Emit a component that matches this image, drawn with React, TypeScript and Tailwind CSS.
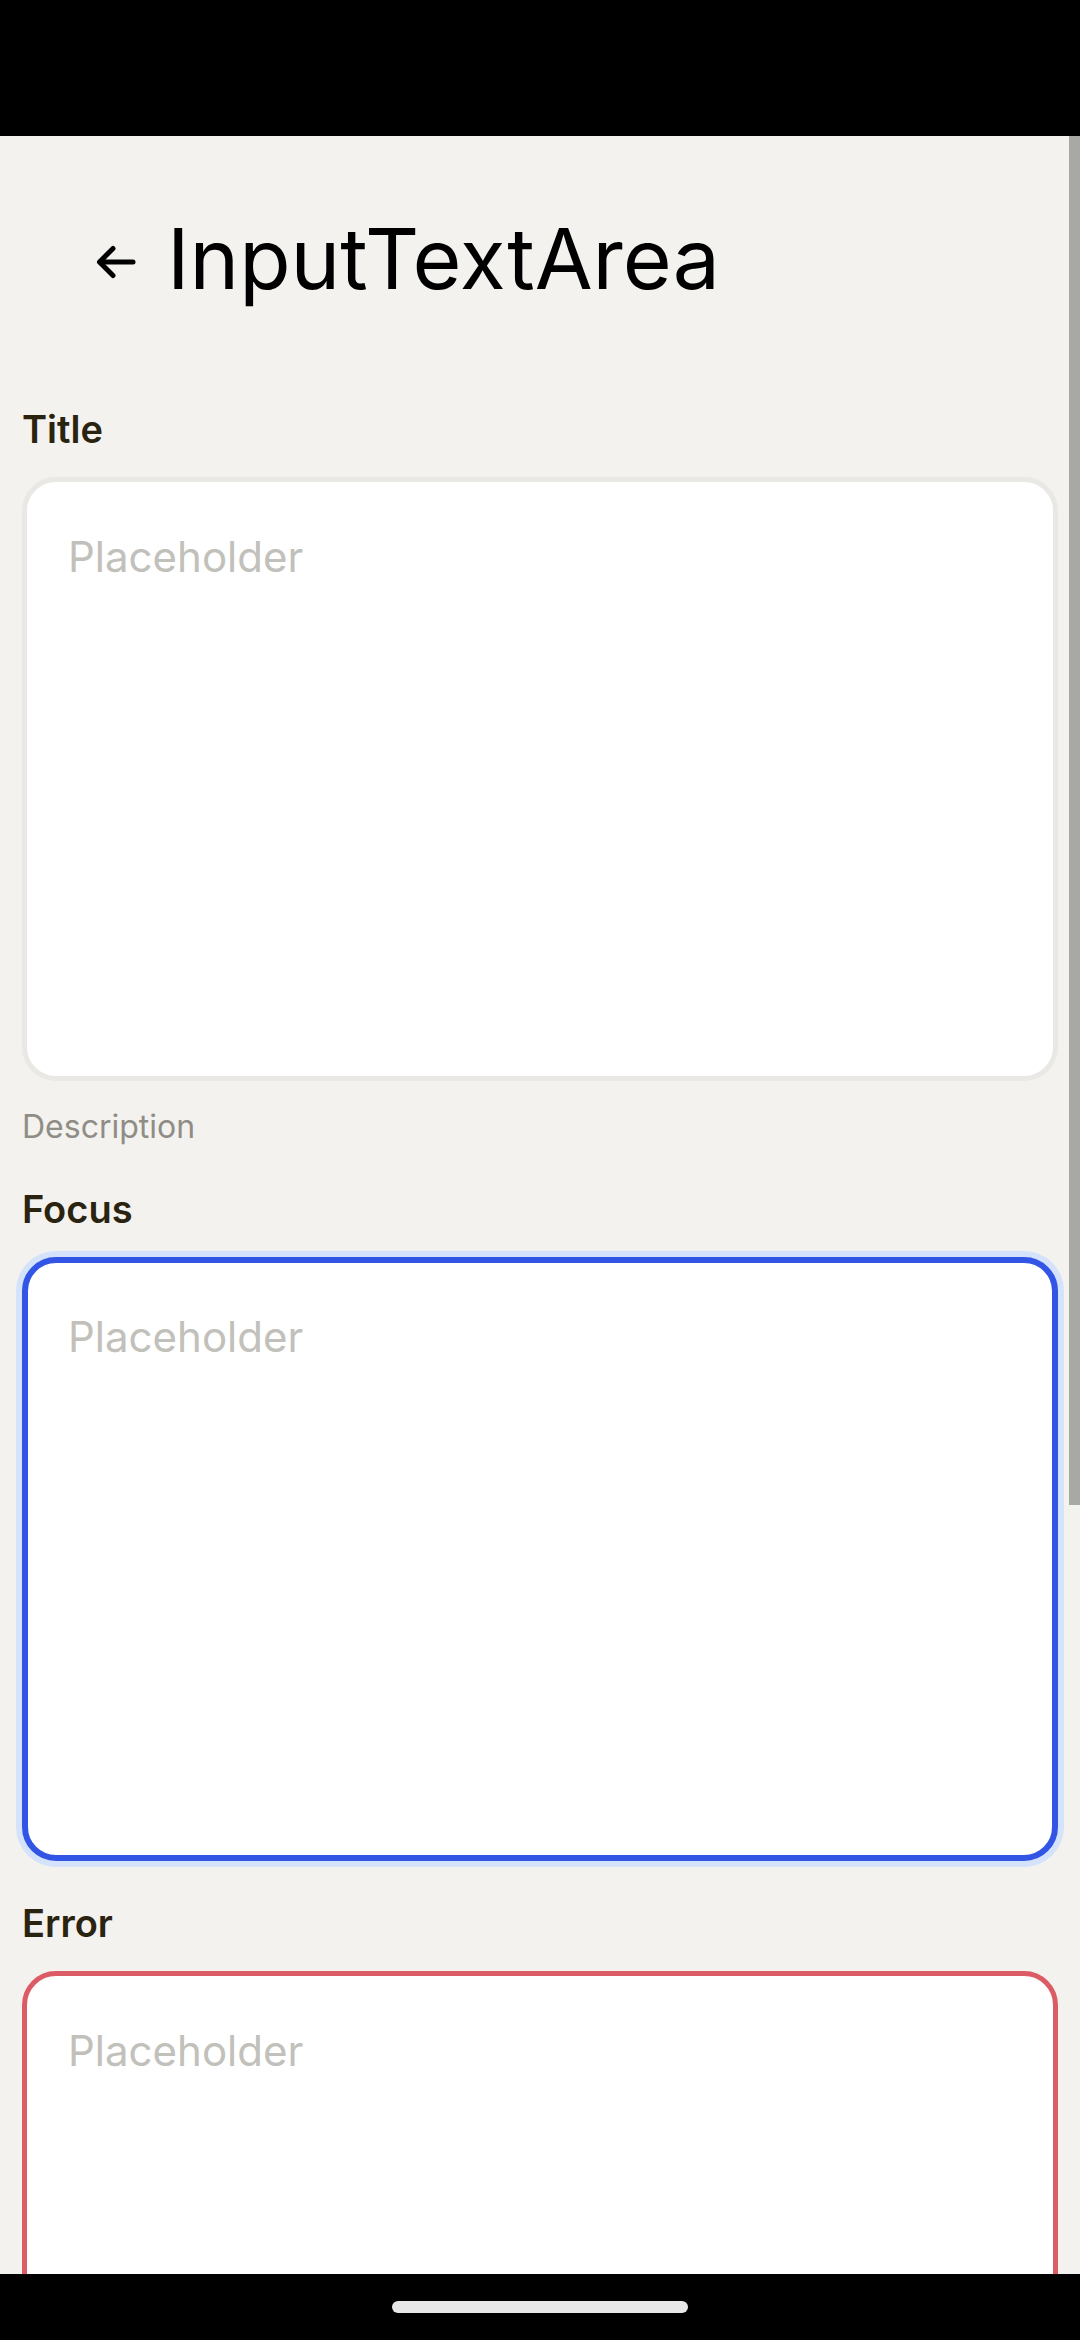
import React from "react";

const font = { fontFamily: "Inter, 'Noto Sans', sans-serif" };

function Area({ kind }: { kind: "normal" | "focus" | "error" }) {
  const cls =
    kind === "focus"
      ? "border-[6px] border-[#3355e6] shadow-[0_0_0_6px_#d4e2fb]"
      : kind === "error"
      ? "border-[5px] border-[#dc5c66]"
      : "border-[5px] border-[#e9e8e4]";
  return (
    <div
      className={`mx-[22px] h-[604px] shrink-0 rounded-[34px] bg-white ${cls} ${
        kind === "focus" ? "pt-[46px] pl-[40px]" : "pt-[47px] pl-[41px]"
      }`}
    >
      <div className="text-[42px] leading-[56px] text-[#c1c0ba]">Placeholder</div>
    </div>
  );
}

function Label({ children, mt }: { children: React.ReactNode; mt: string }) {
  return (
    <div
      className={`${mt} mb-[24px] ml-[22px] text-[38px] font-semibold leading-[48px] text-[#2a2310]`}
    >
      {children}
    </div>
  );
}

export default function App() {
  return (
    <div className="flex h-[2340px] w-[1080px] flex-col overflow-hidden bg-black" style={font}>
      <div className="h-[136px] shrink-0 bg-black" />
      <div className="relative flex min-h-0 flex-1 flex-col overflow-hidden bg-[#f3f2ee]">
        <div className="absolute right-0 top-0 h-[1369px] w-[11px] bg-[#a8a8a4]" />
        <div className="mt-[73px] flex h-[100px] shrink-0 items-center">
          <svg
            className="ml-[96px] mt-[6px]"
            width="40"
            height="36"
            viewBox="0 0 40 36"
            fill="none"
            stroke="#000"
            strokeWidth="5"
            strokeLinecap="round"
            strokeLinejoin="round"
          >
            <path d="M37 18H4" />
            <path d="M17 4.5L3.5 18L17 31.5" />
          </svg>
          <div className="ml-[31px] text-[84px] font-normal leading-[100px] text-black">
            InputTextArea
          </div>
        </div>
        <Label mt="mt-[96px]">Title</Label>
        <Area kind="normal" />
        <div className="ml-[22px] mt-[24px] text-[32px] leading-[44px] text-[#8f8d86]">
          Description
        </div>
        <Label mt="mt-[36px]">Focus</Label>
        <Area kind="focus" />
        <Label mt="mt-[38px]">Error</Label>
        <Area kind="error" />
      </div>
      <div className="flex h-[66px] shrink-0 items-center justify-center bg-black">
        <div className="h-[12px] w-[296px] rounded-full bg-[#e8e8e8]" />
      </div>
    </div>
  );
}
